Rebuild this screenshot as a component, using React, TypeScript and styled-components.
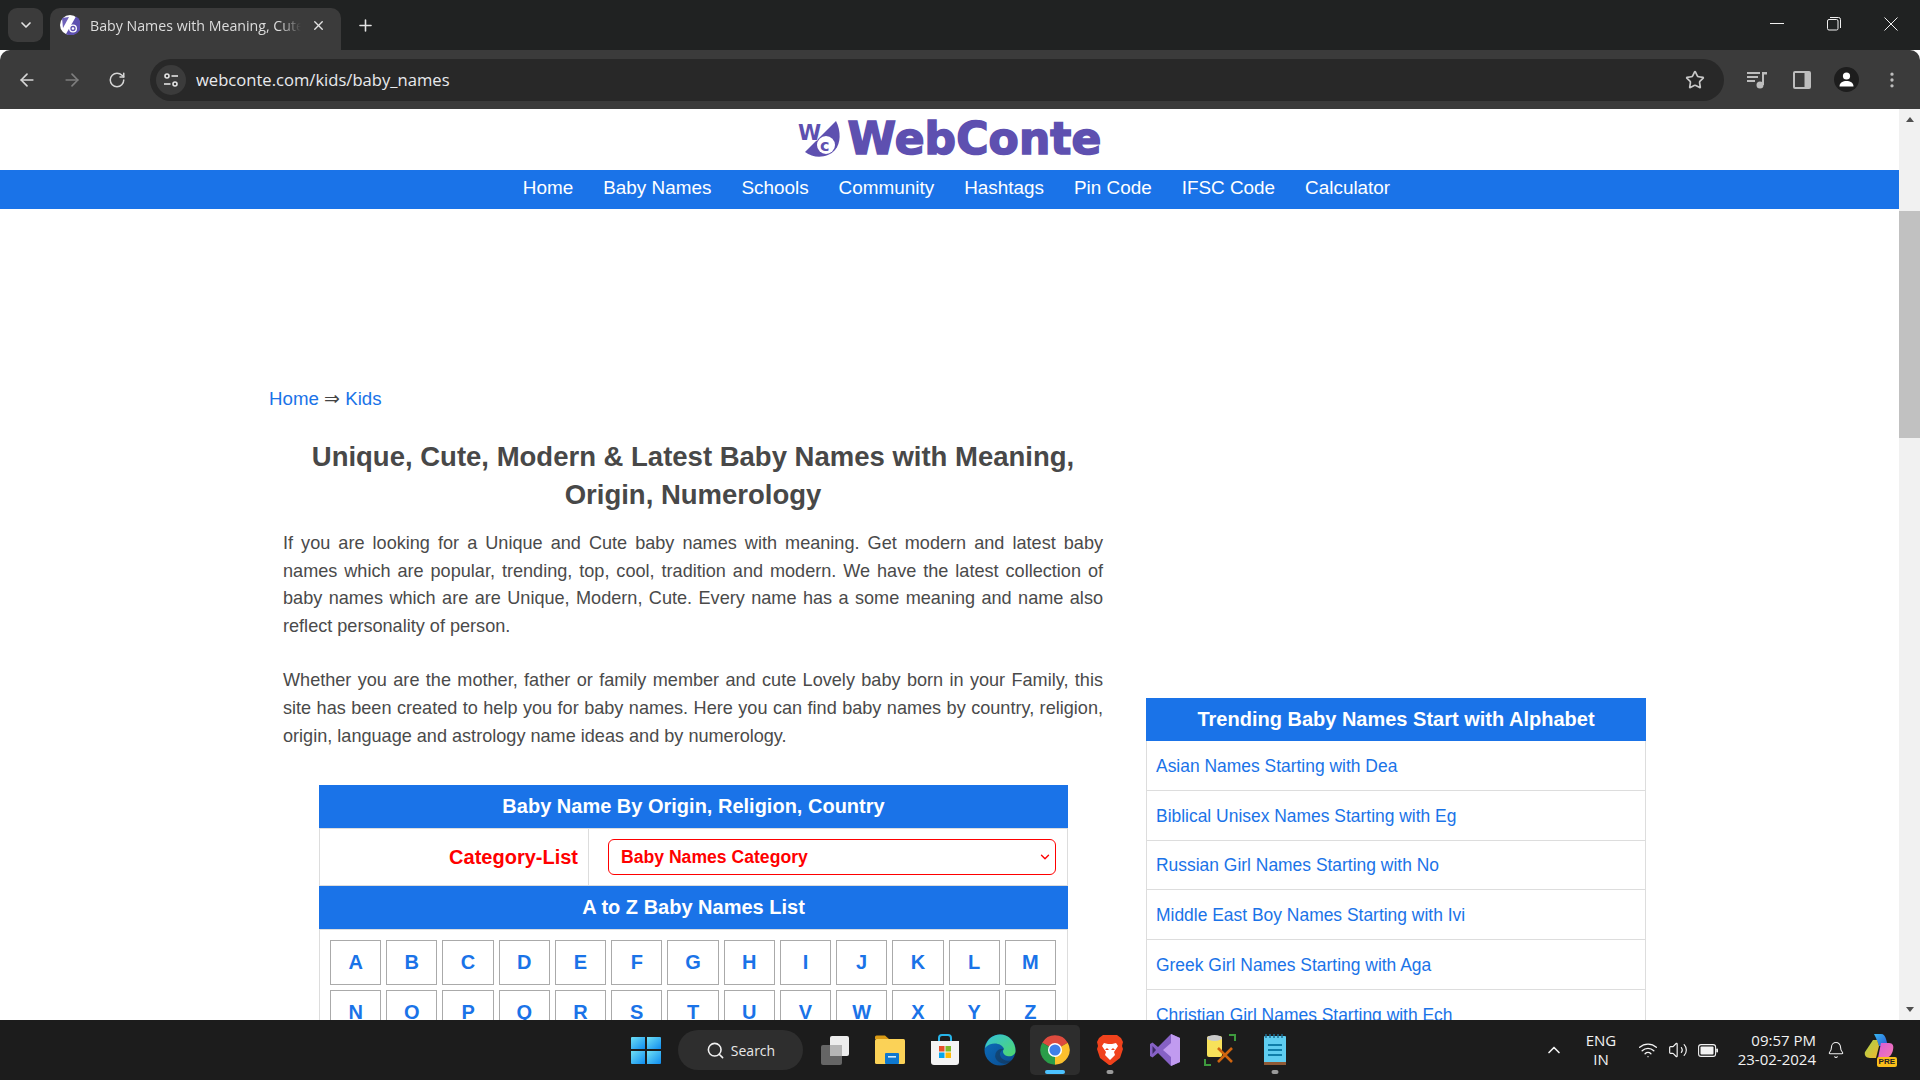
import React from "react";
import styled, { createGlobalStyle } from "styled-components";
import {
  ArrowLeft,
  ArrowRight,
  RotateCw,
  X,
  Plus,
  ChevronDown,
  ChevronUp,
  Star,
  EllipsisVertical,
  Search,
  Wifi,
  Volume2,
  Bell,
} from "lucide-react";

const GlobalStyle = createGlobalStyle`
  html, body {
    margin: 0;
    padding: 0;
    height: 100%;
    overflow: hidden;
    background: #fff;
  }
  * { box-sizing: border-box; }
`;

const Screen = styled.div`
  width: 1920px;
  height: 1080px;
  display: flex;
  flex-direction: column;
  overflow: hidden;
  font-family: "Liberation Sans", Arial, sans-serif;
`;

/* browser chrome */
const TabStrip = styled.div`
  height: 50px;
  flex: none;
  background: #202222;
  display: flex;
  align-items: flex-end;
  padding-left: 8px;
  font-family: "Open Sans", "Noto Sans", sans-serif;
  color: #e3e3e3;
`;

const TabSearch = styled.div`
  width: 35px;
  height: 34px;
  margin-bottom: 8px;
  border-radius: 9px;
  background: #3b3b3b;
  display: flex;
  align-items: center;
  justify-content: center;
`;

const Tab = styled.div`
  width: 291px;
  height: 42px;
  margin-left: 7px;
  padding: 0 10px 8px 10px;
  background: #3b3b3b;
  border-radius: 10px 10px 0 0;
  display: flex;
  align-items: center;
  gap: 10px;
`;

const TabTitle = styled.div`
  width: 211px;
  font-size: 14.2px;
  white-space: nowrap;
  overflow: hidden;
  color: #dcdcdc;
  -webkit-mask-image: linear-gradient(to right, #000 90%, transparent 100%);
  mask-image: linear-gradient(to right, #000 90%, transparent 100%);
`;

const NewTab = styled.div`
  width: 24px;
  height: 42px;
  margin-left: 12px;
  padding-bottom: 8px;
  display: flex;
  align-items: center;
  justify-content: center;
`;

const WindowControls = styled.div`
  margin-left: auto;
  height: 50px;
  display: flex;
  align-items: center;
  padding-right: 1px;
  padding-bottom: 2px;
`;

const WindowButton = styled.div`
  width: 57px;
  display: flex;
  justify-content: center;
`;

const Toolbar = styled.div`
  height: 59px;
  flex: none;
  background: #3b3b3b;
  border-radius: 10px 10px 0 0;
  margin-top: 0;
  display: flex;
  align-items: center;
  padding: 0 0 0 9px;
  color: #d6d6d6;
`;

const NavIcon = styled.div<{ $dim?: boolean }>`
  width: 36px;
  height: 36px;
  margin-right: 9px;
  display: flex;
  align-items: center;
  justify-content: center;
  color: ${(p) => (p.$dim ? "#7e7e7e" : "#d6d6d6")};
`;

const Omnibox = styled.div`
  width: 1574px;
  height: 42px;
  margin-left: 6px;
  background: #282828;
  border-radius: 21px;
  display: flex;
  align-items: center;
  padding: 0 19px 0 6px;
`;

const SiteChip = styled.div`
  width: 30px;
  height: 30px;
  border-radius: 50%;
  background: #3b3b3b;
  display: flex;
  align-items: center;
  justify-content: center;
`;

const Url = styled.div`
  margin-left: 10px;
  font-family: "Open Sans", "Noto Sans", sans-serif;
  font-size: 16.6px;
  color: #e8eaed;
`;

const StarSlot = styled.div`
  margin-left: auto;
  display: flex;
  color: #c8c8c8;
`;

const ToolbarRight = styled.div`
  display: flex;
  align-items: center;
  margin-left: 10px;
`;

const ToolButton = styled.div`
  width: 45px;
  display: flex;
  justify-content: center;
`;

const Avatar = styled.div`
  width: 25px;
  height: 25px;
  border-radius: 50%;
  background: #1d1d1d;
  display: flex;
  align-items: center;
  justify-content: center;
`;

/* viewport */
const Viewport = styled.div`
  flex: 1;
  min-height: 0;
  display: flex;
  background: #fff;
`;

const Page = styled.div`
  flex: 1;
  min-width: 0;
  overflow: hidden;
  color: #444;
`;

const Scrollbar = styled.div`
  width: 21px;
  flex: none;
  background: #f1f1f1;
  display: flex;
  flex-direction: column;
  align-items: center;
`;

const ScrollArrow = styled.div<{ $down?: boolean }>`
  height: 21px;
  flex: none;
  display: flex;
  align-items: center;
  justify-content: center;

  &::before {
    content: "";
    border-left: 4.5px solid transparent;
    border-right: 4.5px solid transparent;
    ${(p) =>
      p.$down
        ? "border-top: 5px solid #505050;"
        : "border-bottom: 5px solid #505050;"}
  }
`;

const ScrollTrack = styled.div`
  flex: 1;
  width: 100%;
`;

const ScrollThumb = styled.div`
  width: 100%;
  height: 227px;
  margin-top: 81px;
  background: #c1c1c1;
`;

const LogoBar = styled.header`
  height: 61px;
  display: flex;
  align-items: center;
  justify-content: center;
  gap: 6px;
  padding-bottom: 1px;
`;

const LogoText = styled.div`
  font-family: "DejaVu Sans", "Lato", sans-serif;
  font-weight: 700;
  font-size: 44px;
  line-height: 1;
  color: #5e50b0;
  -webkit-text-stroke: 1.6px #5e50b0;
  letter-spacing: 0.1px;
`;

const NavBar = styled.nav`
  height: 39px;
  background: #1a73e8;
  display: flex;
  align-items: center;
  justify-content: center;
  gap: 30px;
  padding: 0 0 3px 14px;
`;

const NavLink = styled.a`
  color: #fff;
  font-size: 18.9px;
  line-height: 1;
`;

const Main = styled.main`
  display: flex;
  align-items: flex-start;
  padding-left: 269px;
  gap: 29px;
`;

const LeftColumn = styled.section`
  width: 848px;
  flex: none;
  padding-top: 177px;
`;

const RightColumn = styled.aside`
  width: 500px;
  flex: none;
  padding-top: 489px;
`;

const Crumbs = styled.div`
  font-size: 18.7px;
  line-height: 26px;
  color: #444;
`;

const Link = styled.a`
  color: #1a73e8;
`;

const Heading = styled.h1`
  margin: 26px 0 16px;
  font-size: 27.5px;
  line-height: 38px;
  font-weight: 700;
  text-align: center;
  color: #484848;
`;

const Paragraph = styled.p`
  margin: 0 14px 26.5px;
  font-size: 18.1px;
  line-height: 27.7px;
  text-align: justify;
  color: #4a4a4a;
`;

const NameTable = styled.div`
  width: 749px;
  margin: 35px 0 0 50px;
  border-left: 1px solid #ddd;
  border-right: 1px solid #ddd;
`;

const BlueHead = styled.div`
  height: 43px;
  margin: 0 -1px;
  background: #1a73e8;
  color: #fff;
  font-size: 20px;
  font-weight: 700;
  display: flex;
  align-items: center;
  justify-content: center;
`;

const TrendingHead = styled(BlueHead)`
  margin: 0;
`;

const CategoryRow = styled.div`
  height: 58px;
  display: grid;
  grid-template-columns: 269px 1fr;
  border-bottom: 1px solid #ddd;
  border-top: 1px solid #ddd;
`;

const CategoryLabel = styled.label`
  padding-right: 10px;
  display: flex;
  align-items: center;
  justify-content: flex-end;
  border-right: 1px solid #ddd;
  color: #f00;
  font-size: 20px;
  font-weight: 700;
`;

const CategoryCell = styled.div`
  display: flex;
  align-items: center;
  padding: 0 11px 0 19px;
`;

const SelectWrap = styled.div`
  position: relative;
  width: 100%;
  display: flex;
  color: #f00;

  svg {
    position: absolute;
    right: 4px;
    top: 11px;
    pointer-events: none;
  }
`;

const CategorySelect = styled.select`
  width: 100%;
  height: 36px;
  padding-left: 12px;
  background: #fff;
  border: 1px solid #f00;
  border-radius: 6px;
  color: #f00;
  font-family: "Liberation Sans", Arial, sans-serif;
  font-size: 17.6px;
  font-weight: 700;
  appearance: none;
`;

const LetterGrid = styled.div`
  display: grid;
  grid-template-columns: repeat(13, 1fr);
  gap: 5px;
  padding: 10px 11px 10px 10px;
  border-top: 1px solid #ddd;
`;

const LetterCell = styled.a`
  height: 45px;
  display: flex;
  align-items: center;
  justify-content: center;
  border: 1px solid #aaa;
  color: #1a73e8;
  font-size: 20px;
  font-weight: 700;
`;

const TrendingList = styled.div`
  border-left: 1px solid #ddd;
  border-right: 1px solid #ddd;
`;

const TrendingItem = styled.a`
  height: 49.8px;
  padding: 2px 0 0 9px;
  display: flex;
  align-items: center;
  border-bottom: 1px solid #ddd;
  color: #1a73e8;
  font-size: 17.45px;
`;

/* taskbar */
const Taskbar = styled.footer`
  height: 60px;
  flex: none;
  background: #1c1c1c;
  display: flex;
  align-items: center;
  padding-left: 624px;
  color: #f2f2f2;
  font-family: "Open Sans", "Noto Sans", sans-serif;
`;

const StartSlot = styled.div`
  width: 44px;
  display: flex;
  justify-content: center;
`;

const SearchPill = styled.div`
  width: 125px;
  height: 40px;
  margin-left: 10px;
  border-radius: 20px;
  background: #2e2e2e;
  display: flex;
  align-items: center;
  justify-content: center;
  gap: 6px;
  font-size: 14px;
  color: #e8e8e8;
`;

const AppTray = styled.div`
  display: flex;
  gap: 5px;
  margin-left: 7px;
`;

const AppSlot = styled.div<{ $active?: boolean }>`
  position: relative;
  width: 50px;
  height: 50px;
  border-radius: 5px;
  display: flex;
  align-items: center;
  justify-content: center;
  background: ${(p) => (p.$active ? "#2d2d2d" : "transparent")};
`;

const RunDot = styled.span<{ $active?: boolean }>`
  position: absolute;
  bottom: 1px;
  left: 50%;
  transform: translateX(-50%);
  width: ${(p) => (p.$active ? 20 : 7)}px;
  height: 4px;
  border-radius: 2px;
  background: ${(p) => (p.$active ? "#4cc2ff" : "#9a9a9a")};
`;

const SystemTray = styled.div`
  margin-left: auto;
  display: flex;
  align-items: center;
  height: 100%;
  color: #f2f2f2;
  font-size: 15px;
`;

const TrayLang = styled.div`
  width: 40px;
  margin-left: 17px;
  text-align: center;
  line-height: 19px;
`;

const TrayIcons = styled.div`
  display: flex;
  align-items: center;
  gap: 10px;
  margin-left: 17px;
`;

const Clock = styled.div`
  width: 90px;
  margin-left: 8px;
  text-align: right;
  line-height: 19px;
  white-space: nowrap;
`;

const BellSlot = styled.div`
  margin-left: 11px;
  display: flex;
`;

const CopilotSlot = styled.div`
  position: relative;
  width: 32px;
  height: 32px;
  margin: 0 24px 0 19px;
`;

const PreBadge = styled.span`
  position: absolute;
  right: -1px;
  bottom: -1px;
  padding: 0 2px;
  height: 10px;
  border-radius: 2px;
  background: #fbbf1a;
  color: #222;
  font-family: "Liberation Sans", Arial, sans-serif;
  font-size: 8px;
  line-height: 10px;
  font-weight: 700;
`;

const LogoMark = () => (
  <svg width="44" height="40" viewBox="0 0 44 40">
    <path d="M38 2 L7 33 C16 40 30 39 37 31 C43 24 43 12 38 2Z" fill="#5e50b0" />
    <circle cx="28" cy="26" r="9" fill="#fff" />
    <text x="22" y="32" fontFamily="DejaVu Sans" fontWeight="700" fontSize="16" fill="#5e50b0">
      c
    </text>
    <text
      x="0"
      y="21"
      fontFamily="DejaVu Sans"
      fontWeight="700"
      fontSize="21"
      fill="#5e50b0"
      stroke="#fff"
      strokeWidth="1"
      paintOrder="stroke"
    >
      W
    </text>
  </svg>
);

const Favicon = () => (
  <svg width="20" height="20" viewBox="0 0 20 20">
    <circle cx="10" cy="10" r="10" fill="#fff" />
    <path d="M16 1.6 A10 10 0 0 1 6 19 Z" fill="#5e50b0" />
    <path d="M2 3 L9 2 L3 13 Z" fill="#5e50b0" opacity="0.9" />
    <circle cx="13" cy="13.5" r="4" fill="#fff" />
    <circle cx="13" cy="13.5" r="2" fill="none" stroke="#5e50b0" strokeWidth="1.3" />
  </svg>
);

const TuneIcon = () => (
  <svg width="16" height="16" viewBox="0 0 16 16" fill="none" stroke="#e3e3e3" strokeWidth="1.6">
    <circle cx="4" cy="4" r="2" />
    <path d="M8.5 4H15" />
    <path d="M1 12H7.5" />
    <circle cx="12" cy="12" r="2" />
  </svg>
);

const MediaIcon = () => (
  <svg width="20" height="18" viewBox="0 0 20 18" fill="#bdbdbd">
    <rect x="0" y="1" width="13" height="2" />
    <rect x="0" y="5" width="11" height="2" />
    <rect x="0" y="9" width="8" height="2" />
    <circle cx="13" cy="14" r="3.5" />
    <path d="M15 14V1H20V3.5H17V14Z" />
  </svg>
);

const PanelIcon = () => (
  <svg width="18" height="18" viewBox="0 0 18 18">
    <rect x="0" y="0" width="18" height="18" rx="2" fill="#bdbdbd" />
    <rect x="2" y="2" width="9.5" height="14" fill="#3b3b3b" />
  </svg>
);

const PersonIcon = () => (
  <svg width="17" height="17" viewBox="0 0 17 17" fill="#fff">
    <circle cx="8.5" cy="5" r="3.6" />
    <path d="M1.5 15.5C1.5 11.5 5 10 8.5 10S15.5 11.5 15.5 15.5Z" />
  </svg>
);

const RestoreIcon = () => (
  <svg width="14" height="14" viewBox="0 0 14 14" fill="none" stroke="#f0f0f0" strokeWidth="1">
    <rect x="0.5" y="2.5" width="10.5" height="10.5" rx="1.5" />
    <path d="M3 0.5H11.5A2 2 0 0 1 13.5 2.5V11" />
  </svg>
);

const ThinClose = () => (
  <svg width="14" height="14" viewBox="0 0 14 14" stroke="#f0f0f0" strokeWidth="1">
    <path d="M0.5 0.5L13.5 13.5M13.5 0.5L0.5 13.5" />
  </svg>
);

const MinIcon = () => (
  <svg width="14" height="2" viewBox="0 0 14 2">
    <rect width="14" height="1" fill="#f0f0f0" />
  </svg>
);

const WindowsIcon = () => (
  <svg width="30" height="30" viewBox="0 0 30 30">
    <defs>
      <linearGradient id="win" x1="0" y1="0" x2="1" y2="1">
        <stop offset="0" stopColor="#6fe0f5" />
        <stop offset="1" stopColor="#0f8cf0" />
      </linearGradient>
    </defs>
    <path d="M1 2H14V14H0V3A1 1 0 0 1 1 2Z" fill="url(#win)" />
    <path d="M16 2H29A1 1 0 0 1 30 3V14H16Z" fill="url(#win)" />
    <path d="M0 16H14V29H1A1 1 0 0 1 0 28Z" fill="url(#win)" />
    <path d="M16 16H30V28A1 1 0 0 1 29 29H16Z" fill="url(#win)" />
  </svg>
);

const TaskViewIcon = () => (
  <svg width="32" height="32" viewBox="0 0 32 32">
    <rect x="11" y="2" width="19" height="20" rx="2" fill="#ededed" />
    <rect x="2" y="11" width="21" height="20" rx="2" fill="#6b6b6b" opacity="0.92" />
    <rect x="11" y="11" width="12" height="11" fill="#b5b5b5" />
  </svg>
);

const ExplorerIcon = () => (
  <svg width="32" height="30" viewBox="0 0 32 30">
    <path d="M1 2A1.500 1.500 0 0 1 2.500 0.500H11L15 4H1Z" fill="#d99a14" />
    <rect x="1" y="4" width="30" height="25" rx="1.500" fill="#fbd257" />
    <rect x="11" y="18" width="14" height="11" rx="1" fill="#0e78cf" />
    <rect x="14" y="21" width="8" height="1.600" fill="#d3ecfb" />
  </svg>
);

const StoreIcon = () => (
  <svg width="30" height="32" viewBox="0 0 30 32">
    <path d="M9 7V4A3 3 0 0 1 12 1H18A3 3 0 0 1 21 4V7" fill="none" stroke="#27b4e8" strokeWidth="2" />
    <path d="M1 7H29V28A3 3 0 0 1 26 31H4A3 3 0 0 1 1 28Z" fill="#f4f4f4" />
    <rect x="9" y="12" width="5.500" height="5.500" fill="#e8502a" />
    <rect x="15.500" y="12" width="5.500" height="5.500" fill="#7fba29" />
    <rect x="9" y="18.500" width="5.500" height="5.500" fill="#05a6f0" />
    <rect x="15.500" y="18.500" width="5.500" height="5.500" fill="#ffba08" />
  </svg>
);

const EdgeIcon = () => (
  <svg width="32" height="32" viewBox="0 0 32 32">
    <defs>
      <linearGradient id="edgeA" x1="0" y1="0" x2="1" y2="1">
        <stop offset="0" stopColor="#35c1d8" />
        <stop offset="1" stopColor="#4fd86c" />
      </linearGradient>
      <linearGradient id="edgeB" x1="0" y1="0" x2="1" y2="1">
        <stop offset="0" stopColor="#0c6fbd" />
        <stop offset="1" stopColor="#0a4a8e" />
      </linearGradient>
    </defs>
    <circle cx="16" cy="16" r="15.500" fill="url(#edgeB)" />
    <path d="M1 14C3 4 10 .5 16 .5C25 .5 31.500 8 31.500 17C31.500 21 27 23 23 22C19 21 18 17 20 15C18 9 7 7 1 14Z" fill="url(#edgeA)" />
    <path d="M20 15A7 7 0 0 0 15 28C20 31 26 30 29 26C24 28 17 26 16 21C15.500 18 18 16 20 15Z" fill="#1c1c1c" opacity="0.35" />
  </svg>
);

const ChromeIcon = () => (
  <svg width="32" height="32" viewBox="0 0 24 24">
    <path d="M2.470 6.500A11 11 0 0 1 21.530 6.500L12 12Z" fill="#dd4b3e" />
    <path d="M21.530 6.500A11 11 0 0 1 12 23L12 12Z" fill="#fbc02d" />
    <path d="M12 23A11 11 0 0 1 2.470 6.500L12 12Z" fill="#2a9d49" />
    <circle cx="12" cy="12" r="5.300" fill="#fff" />
    <circle cx="12" cy="12" r="4.200" fill="#3f7fe8" />
  </svg>
);

const BraveIcon = () => (
  <svg width="28" height="32" viewBox="0 0 28 32">
    <path d="M7 1H21L25 4L27 8L26 12L27 15L24 24L15 31H13L4 24L1 15L2 12L1 8L3 4Z" fill="#f0421c" />
    <path d="M8 9L12 10H16L20 9L22 12L18 18L19 21L14 26L9 21L10 18L6 12Z" fill="#fff" />
    <path d="M11 14L13 16H9ZM17 14L19 16H15Z" fill="#f0421c" />
  </svg>
);

const StudioIcon = () => (
  <svg width="30" height="32" viewBox="0 0 30 32">
    <path d="M21 0L30 4V28L21 32L8 19L2.500 23.500L0 22V10L2.500 8.500L8 13Z" fill="#8661c5" />
    <path d="M21 0L30 4V28L21 32ZM21 9L13 16L21 23Z" fill="#c19bf0" />
    <path d="M2.500 12V20L6 16Z" fill="#3c2a63" />
  </svg>
);

const ToolsIcon = () => (
  <svg width="32" height="32" viewBox="0 0 32 32">
    <path d="M1 25V31H7M25 1H31V7" fill="none" stroke="#3e9a3e" strokeWidth="2" />
    <rect x="3" y="2" width="15" height="21" rx="2" fill="#f7e15a" />
    <ellipse cx="10.500" cy="4" rx="7.500" ry="3" fill="#c9c9c9" />
    <path d="M14 14L28 28M28 14L14 28" stroke="#d0650f" strokeWidth="2.600" />
  </svg>
);

const NotepadIcon = () => (
  <svg width="24" height="32" viewBox="0 0 24 32">
    <rect x="1" y="2" width="22" height="29" rx="1" fill="#5fcdf0" />
    <rect x="1" y="28" width="22" height="3" fill="#8f5a36" />
    <path d="M3 0V4M7 0V4M11 0V4M15 0V4M19 0V4" stroke="#1d6f94" strokeWidth="1.500" />
    <path d="M5 11H19M5 16H19M5 21H19" stroke="#0f7ea9" strokeWidth="2" />
  </svg>
);

const BatteryIcon = () => (
  <svg width="20" height="13" viewBox="0 0 20 13" fill="none">
    <rect x="0.600" y="0.600" width="17" height="11.800" rx="2.500" stroke="#f2f2f2" strokeWidth="1.100" />
    <rect x="2.500" y="2.500" width="13" height="8" rx="1" fill="#f2f2f2" />
    <rect x="18.300" y="4.500" width="1.700" height="4" rx="0.800" fill="#f2f2f2" />
  </svg>
);

const CopilotIcon = () => (
  <svg width="30" height="26" viewBox="0 0 30 26">
    <defs>
      <linearGradient id="copA" x1="0" y1="0" x2="1" y2="1">
        <stop offset="0" stopColor="#37b7f0" />
        <stop offset="1" stopColor="#2a56d6" />
      </linearGradient>
      <linearGradient id="copB" x1="0" y1="0" x2="1" y2="1">
        <stop offset="0" stopColor="#a5d34a" />
        <stop offset="1" stopColor="#f2b72e" />
      </linearGradient>
      <linearGradient id="copC" x1="0" y1="0" x2="1" y2="1">
        <stop offset="0" stopColor="#d75bd8" />
        <stop offset="1" stopColor="#f67ab0" />
      </linearGradient>
    </defs>
    <path d="M10 0H17C20 0 21 2 22 5L24 12H15L12 4Z" fill="url(#copA)" />
    <path d="M9 6H13L15 12L12 24H6C2 24 0 21 1 18Z" fill="url(#copB)" />
    <path d="M17 9H25C29 9 30 12 29 16C28 21 25 24 21 24H14Z" fill="url(#copC)" />
  </svg>
);

const navItems = [
  "Home",
  "Baby Names",
  "Schools",
  "Community",
  "Hashtags",
  "Pin Code",
  "IFSC Code",
  "Calculator",
];

const letters = "ABCDEFGHIJKLMNOPQRSTUVWXYZ".split("");

const trending = [
  "Asian Names Starting with Dea",
  "Biblical Unisex Names Starting with Eg",
  "Russian Girl Names Starting with No",
  "Middle East Boy Names Starting with Ivi",
  "Greek Girl Names Starting with Aga",
  "Christian Girl Names Starting with Ech",
];

const App = () => {
  return (
    <Screen>
      <GlobalStyle />
      <TabStrip>
        <TabSearch>
          <ChevronDown size={16} color="#e3e3e3" strokeWidth={2.5} />
        </TabSearch>
        <Tab>
          <Favicon />
          <TabTitle>Baby Names with Meaning, Cute</TabTitle>
          <X size={15} color="#e3e3e3" strokeWidth={2.2} />
        </Tab>
        <NewTab>
          <Plus size={19} color="#e3e3e3" strokeWidth={2} />
        </NewTab>
        <WindowControls>
          <WindowButton>
            <MinIcon />
          </WindowButton>
          <WindowButton>
            <RestoreIcon />
          </WindowButton>
          <WindowButton>
            <ThinClose />
          </WindowButton>
        </WindowControls>
      </TabStrip>

      <Toolbar>
        <NavIcon>
          <ArrowLeft size={20} />
        </NavIcon>
        <NavIcon $dim>
          <ArrowRight size={20} />
        </NavIcon>
        <NavIcon>
          <RotateCw size={18} />
        </NavIcon>
        <Omnibox>
          <SiteChip>
            <TuneIcon />
          </SiteChip>
          <Url>webconte.com/kids/baby_names</Url>
          <StarSlot>
            <Star size={20} strokeWidth={2} />
          </StarSlot>
        </Omnibox>
        <ToolbarRight>
          <ToolButton>
            <MediaIcon />
          </ToolButton>
          <ToolButton>
            <PanelIcon />
          </ToolButton>
          <ToolButton>
            <Avatar>
              <PersonIcon />
            </Avatar>
          </ToolButton>
          <ToolButton>
            <EllipsisVertical size={20} color="#bdbdbd" />
          </ToolButton>
        </ToolbarRight>
      </Toolbar>

      <Viewport>
        <Page>
          <LogoBar>
            <LogoMark />
            <LogoText>WebConte</LogoText>
          </LogoBar>
          <NavBar>
            {navItems.map((item) => (
              <NavLink key={item}>{item}</NavLink>
            ))}
          </NavBar>
          <Main>
            <LeftColumn>
              <Crumbs>
                <Link>Home</Link> ⇒ <Link>Kids</Link>
              </Crumbs>
              <Heading>
                Unique, Cute, Modern &amp; Latest Baby Names with Meaning,
                <br />
                Origin, Numerology
              </Heading>
              <Paragraph>
                If you are looking for a Unique and Cute baby names with
                meaning. Get modern and latest baby names which are popular,
                trending, top, cool, tradition and modern. We have the latest
                collection of baby names which are are Unique, Modern, Cute.
                Every name has a some meaning and name also reflect personality
                of person.
              </Paragraph>
              <Paragraph>
                Whether you are the mother, father or family member and cute
                Lovely baby born in your Family, this site has been created to
                help you for baby names. Here you can find baby names by
                country, religion, origin, language and astrology name ideas
                and by numerology.
              </Paragraph>
              <NameTable>
                <BlueHead>Baby Name By Origin, Religion, Country</BlueHead>
                <CategoryRow>
                  <CategoryLabel>Category-List</CategoryLabel>
                  <CategoryCell>
                    <SelectWrap>
                      <CategorySelect>
                        <option>Baby Names Category</option>
                      </CategorySelect>
                      <ChevronDown size={14} strokeWidth={2.4} />
                    </SelectWrap>
                  </CategoryCell>
                </CategoryRow>
                <BlueHead>A to Z Baby Names List</BlueHead>
                <LetterGrid>
                  {letters.map((letter) => (
                    <LetterCell key={letter}>{letter}</LetterCell>
                  ))}
                </LetterGrid>
              </NameTable>
            </LeftColumn>
            <RightColumn>
              <TrendingHead>Trending Baby Names Start with Alphabet</TrendingHead>
              <TrendingList>
                {trending.map((item) => (
                  <TrendingItem key={item}>{item}</TrendingItem>
                ))}
              </TrendingList>
            </RightColumn>
          </Main>
        </Page>
        <Scrollbar>
          <ScrollArrow />
          <ScrollTrack>
            <ScrollThumb />
          </ScrollTrack>
          <ScrollArrow $down />
        </Scrollbar>
      </Viewport>

      <Taskbar>
        <StartSlot>
          <WindowsIcon />
        </StartSlot>
        <SearchPill>
          <Search size={19} color="#f0f0f0" strokeWidth={2} />
          Search
        </SearchPill>
        <AppTray>
          <AppSlot>
            <TaskViewIcon />
          </AppSlot>
          <AppSlot>
            <ExplorerIcon />
          </AppSlot>
          <AppSlot>
            <StoreIcon />
          </AppSlot>
          <AppSlot>
            <EdgeIcon />
          </AppSlot>
          <AppSlot $active>
            <ChromeIcon />
            <RunDot $active />
          </AppSlot>
          <AppSlot>
            <BraveIcon />
            <RunDot />
          </AppSlot>
          <AppSlot>
            <StudioIcon />
          </AppSlot>
          <AppSlot>
            <ToolsIcon />
          </AppSlot>
          <AppSlot>
            <NotepadIcon />
            <RunDot />
          </AppSlot>
        </AppTray>
        <SystemTray>
          <ChevronUp size={20} strokeWidth={2} />
          <TrayLang>
            ENG
            <br />
            IN
          </TrayLang>
          <TrayIcons>
            <Wifi size={20} strokeWidth={1.6} />
            <Volume2 size={20} strokeWidth={1.4} />
            <BatteryIcon />
          </TrayIcons>
          <Clock>
            09:57 PM
            <br />
            23-02-2024
          </Clock>
          <BellSlot>
            <Bell size={18} strokeWidth={1.4} />
          </BellSlot>
          <CopilotSlot>
            <CopilotIcon />
            <PreBadge>PRE</PreBadge>
          </CopilotSlot>
        </SystemTray>
      </Taskbar>
    </Screen>
  );
};

export default App;
